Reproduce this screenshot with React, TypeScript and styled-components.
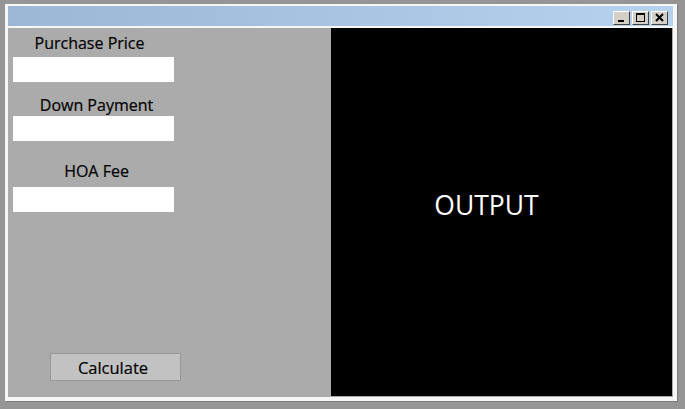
import React from "react";
import styled, { createGlobalStyle } from "styled-components";

const Global = createGlobalStyle`
  html, body { margin: 0; padding: 0; background: #959595; }
  body { font-family: "Open Sans", "Noto Sans", sans-serif; }
  #root { padding: 4px 0 0 5px; height: 409px; box-sizing: border-box; }
`;

const Window = styled.div`
  box-sizing: border-box;
  width: 672px;
  height: 397px;
  background: #f6f6f6;
  padding: 2px 4px 4px 3px;
  box-shadow: 1px 1px 0 #7b7b7b;
  display: flex;
  flex-direction: column;
`;

const TitleBar = styled.div`
  height: 19px;
  margin-bottom: 2px;
  background: linear-gradient(to right, #9cb6d6, #b5d2ee);
  display: flex;
  justify-content: flex-end;
  align-items: flex-end;
  padding: 0 5px 1px 0;
  gap: 2px;
`;

const CtrlButton = styled.div`
  box-sizing: border-box;
  width: 17px;
  height: 14px;
  background: #d4d0c8;
  border-top: 1px solid #ffffff;
  border-left: 1px solid #ffffff;
  border-right: 1px solid #404040;
  border-bottom: 1px solid #404040;
  display: flex;
  align-items: center;
  justify-content: center;
`;

const Content = styled.div`
  flex: 1;
  display: flex;
  border-right: 1px solid #a8a8a8;
  border-bottom: 1px solid #a8a8a8;
`;

const LeftPanel = styled.div`
  width: 323px;
  background: #ababab;
  display: flex;
  flex-direction: column;
  padding-left: 5px;
  box-sizing: border-box;
`;

const Field = styled.div<{ $top: number; $gap: number }>`
  display: flex;
  flex-direction: column;
  width: 161px;
  margin-top: ${(p) => p.$top}px;
  gap: ${(p) => p.$gap}px;
`;

const Label = styled.div<{ $shift: number }>`
  font-size: 16px;
  line-height: 20px;
  color: #000;
  text-align: center;
  transform: translateX(${(p) => p.$shift}px);
  white-space: nowrap;
  -webkit-text-stroke: 0.2px #000;
`;

const Input = styled.div`
  height: 25px;
  background: #ffffff;
`;

const Spacer = styled.div`
  flex: 1;
`;

const CalcButton = styled.div`
  box-sizing: border-box;
  margin: 0 0 15px 37px;
  width: 131px;
  height: 28px;
  padding-right: 5px;
  background: #c2c2c2;
  border: 1px solid #979797;
  font-size: 16.5px;
  color: #000;
  -webkit-text-stroke: 0.2px #000;
  display: flex;
  align-items: center;
  justify-content: center;
`;

const Output = styled.div`
  flex: 1;
  background: #000;
  color: #fff;
  display: flex;
  align-items: center;
  justify-content: center;
  padding: 0 30px 14px 0;
  font-size: 26.5px;
`;

const Icon = ({ kind }: { kind: "min" | "max" | "close" }) => (
  <svg width="11" height="10" viewBox="0 0 11 10">
    {kind === "min" && <rect x="2" y="7" width="6" height="2" fill="#000" />}
    {kind === "max" && (
      <>
        <rect x="1.5" y="0.5" width="8" height="8" fill="none" stroke="#000" strokeWidth="1" />
        <rect x="1" y="0" width="9" height="2" fill="#000" />
      </>
    )}
    {kind === "close" && (
      <path d="M2 1 L9 8 M9 1 L2 8" stroke="#000" strokeWidth="2" />
    )}
  </svg>
);

export default function App() {
  return (
    <>
      <Global />
      <Window>
        <TitleBar>
          <CtrlButton><Icon kind="min" /></CtrlButton>
          <CtrlButton><Icon kind="max" /></CtrlButton>
          <CtrlButton><Icon kind="close" /></CtrlButton>
        </TitleBar>
        <Content>
          <LeftPanel>
            <Field $top={5} $gap={4}>
              <Label $shift={-4}>Purchase Price</Label>
              <Input />
            </Field>
            <Field $top={13} $gap={1}>
              <Label $shift={3}>Down Payment</Label>
              <Input />
            </Field>
            <Field $top={20} $gap={6}>
              <Label $shift={3}>HOA Fee</Label>
              <Input />
            </Field>
            <Spacer />
            <CalcButton>Calculate</CalcButton>
          </LeftPanel>
          <Output>OUTPUT</Output>
        </Content>
      </Window>
    </>
  );
}
